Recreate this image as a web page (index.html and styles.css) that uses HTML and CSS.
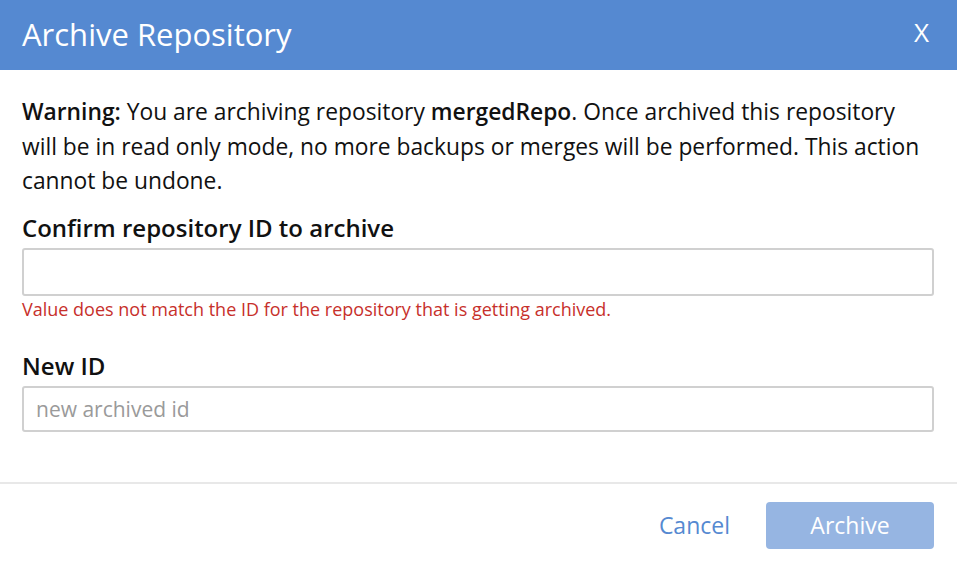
FILE: index.html
```html
<!DOCTYPE html>
<html>
<head>
<meta charset="utf-8">
<link rel="stylesheet" href="styles.css">
</head>
<body>
<div class="modal">
  <header class="modal-header">
    <h1 class="modal-title">Archive Repository</h1>
    <span class="close">X</span>
  </header>
  <div class="modal-body">
    <p class="warning"><b>Warning:</b> You are archiving repository <b>mergedRepo</b>. Once archived this repository will be in read only mode, no more backups or merges will be performed. This action cannot be undone.</p>
    <div class="field">
      <label class="label">Confirm repository ID to archive</label>
      <input class="input" type="text">
      <div class="error">Value does not match the ID for the repository that is getting archived.</div>
    </div>
    <div class="field field-second">
      <label class="label">New ID</label>
      <input class="input input-second" type="text" placeholder="new archived id">
    </div>
  </div>
  <footer class="modal-footer">
    <button class="btn-link">Cancel</button>
    <button class="btn-primary" disabled>Archive</button>
  </footer>
</div>
</body>
</html>
```

FILE: styles.css
```css
* { box-sizing: border-box; }
html, body { margin: 0; padding: 0; background: #fff; }
body { font-family: "Open Sans", "DejaVu Sans", sans-serif; color: #111; }
.modal { width: 957px; height: 564px; display: flex; flex-direction: column; }
.modal-header {
  height: 70px; background: #5589d1; color: #fff;
  display: flex; align-items: center; justify-content: space-between;
  padding: 0 28px 0 22px;
}
.modal-title { margin: 0; font-size: 31px; font-weight: 400; line-height: 1; padding-bottom: 1px; }
.close { font-size: 26px; line-height: 1; margin-top: -6px; }
.modal-body { padding: 25px 23px 0 22px; }
.warning { margin: 0; font-size: 22.8px; line-height: 34.5px; }
.warning b { font-weight: 600; }
.field { display: flex; flex-direction: column; margin-top: 14px; }
.label { font-size: 24px; font-weight: 600; line-height: 30px; margin-bottom: 5px; }
.input {
  width: 912px; height: 48px; border: 2px solid #d0d0d0; border-radius: 3px;
  font-family: inherit; font-size: 21px; padding: 0 12px; outline: none; background: #fff;
}
.input-second { height: 46px; }
.input::placeholder { color: #9a9a9a; }
.error { color: #c7302b; font-size: 18px; line-height: 22px; margin-top: 2px; }
.field-second { margin-top: 31px; }
.modal-footer {
  margin-top: 50px; border-top: 2px solid #e8e8e8;
  display: flex; justify-content: flex-end; align-items: center;
  padding: 18px 23px 0 0; gap: 36px;
}
.btn-link {
  background: none; border: 0; padding: 0; font-family: inherit; font-size: 23px;
  color: #5589d1; cursor: pointer;
}
.btn-primary {
  width: 168px; height: 47px; border: 0; border-radius: 4px; background: #96b5e2;
  color: #fff; font-family: inherit; font-size: 23px; padding: 0;
}
```
